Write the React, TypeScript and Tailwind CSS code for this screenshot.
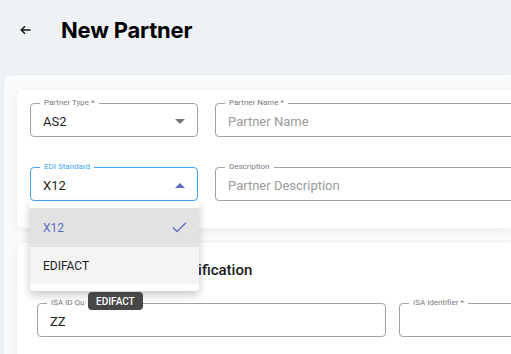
import React from 'react';

const Field = ({
  label,
  value,
  placeholder,
  focused,
  arrow,
  className = '',
}: {
  label: string;
  value?: string;
  placeholder?: string;
  focused?: boolean;
  arrow?: 'up' | 'down';
  className?: string;
}) => (
  <div
    className={`relative h-[34px] rounded-[4px] border ${
      focused ? 'border-[#42a5f5]' : 'border-[#a3a3a3]'
    } flex items-center pt-[3px] pl-[12px] pr-[10px] ${className}`}
  >
    <span
      className={`absolute left-[9px] top-[-6px] bg-white px-[4px] text-[8px] leading-[10px] ${
        focused ? 'text-[#42a5f5]' : 'text-[#7a7a7a]'
      }`}
    >
      {label}
    </span>
    {value ? (
      <span className="flex-1 text-[13px] text-[#1f1f1f]">{value}</span>
    ) : (
      <span className="flex-1 text-[13px] text-[#9a9a9a]">{placeholder}</span>
    )}
    {arrow === 'down' && (
      <svg width="10" height="5" viewBox="0 0 10 5" className="mr-[2px]">
        <path d="M0 0h10L5 5z" fill="#757575" />
      </svg>
    )}
    {arrow === 'up' && (
      <svg width="10" height="5" viewBox="0 0 10 5" className="mr-[2px]">
        <path d="M0 5h10L5 0z" fill="#5c6bc0" />
      </svg>
    )}
  </div>
);

export default function App() {
  return (
    <div
      className="relative w-[511px] h-[354px] overflow-hidden bg-[#eef2f6]"
      style={{ fontFamily: 'Roboto, "Liberation Sans", sans-serif' }}
    >
      {/* Header */}
      <div className="h-[75px] flex items-start pt-[14px]">
        <div className="w-[61px] h-[32px] flex items-center pl-[20px]">
          <svg width="11" height="10" viewBox="0 0 11 10">
            <path d="M10.5 5H1.5M5 1.2L1.2 5 5 8.8" stroke="#111" strokeWidth="1.4" fill="none" />
          </svg>
        </div>
        <h1
          className="text-[22px] leading-[32px] font-bold text-black tracking-[-0.2px]"
          style={{ fontFamily: 'Inter, "Liberation Sans", sans-serif' }}
        >
          New Partner
        </h1>
      </div>

      {/* Panel */}
      <div className="ml-[4px] h-full bg-[#f9fafb] rounded-tl-[8px] pt-[15px] pl-[13px] shadow-[0_0_2px_rgba(0,0,0,0.06)]">
        <div className="bg-white rounded-l-[6px] h-[138px] pt-[13px] pl-[13px] shadow-[0_2px_8px_rgba(0,0,0,0.07)]">
          <div className="flex gap-[17px]">
            <Field label="Partner Type *" value="AS2" arrow="down" className="w-[168px] shrink-0" />
            <Field label="Partner Name *" placeholder="Partner Name" className="w-[320px] shrink-0" />
          </div>
          <div className="flex gap-[17px] mt-[30px]">
            <Field label="EDI Standard" value="X12" arrow="up" focused className="w-[168px] shrink-0" />
            <Field label="Description" placeholder="Partner Description" className="w-[320px] shrink-0" />
          </div>
        </div>

        <div className="mt-[15px] bg-white rounded-l-[6px] h-[140px] pl-[20px] shadow-[0_2px_8px_rgba(0,0,0,0.07)]">
          <div className="h-[54px] flex items-center pl-[49px] text-[15px] font-medium text-[#1a1a1a]">
            ISA Sender Identification
          </div>
          <div className="flex gap-[13px] mt-[6px]">
            <Field label="ISA ID Qu" value="ZZ" className="w-[349px] shrink-0" />
            <Field label="ISA Identifier *" className="w-[200px] shrink-0" />
          </div>
        </div>
      </div>

      {/* Dropdown menu */}
      <div className="absolute left-[30px] top-[201px] w-[169px] bg-white rounded-[4px] py-[7px] shadow-[0_4px_10px_rgba(0,0,0,0.22)]">
        <div className="h-[39px] bg-[#e2e2e2] flex items-center justify-between pl-[13px] pr-[12px] text-[12px] text-[#5c6bc0]">
          <span>X12</span>
          <svg width="15" height="11" viewBox="0 0 15 11">
            <path d="M1 5.5L5 9.5 14 0.8" stroke="#5c6bc0" strokeWidth="1.3" fill="none" />
          </svg>
        </div>
        <div className="h-[37px] bg-[#f4f4f4] flex items-center pl-[13px] text-[12px] text-[#1f1f1f]">
          EDIFACT
        </div>
      </div>

      {/* Tooltip */}
      <div className="absolute left-[88px] top-[292px] h-[18px] px-[8px] rounded-[4px] bg-[#474747] text-white text-[10px] font-medium flex items-center">
        EDIFACT
      </div>
    </div>
  );
}
